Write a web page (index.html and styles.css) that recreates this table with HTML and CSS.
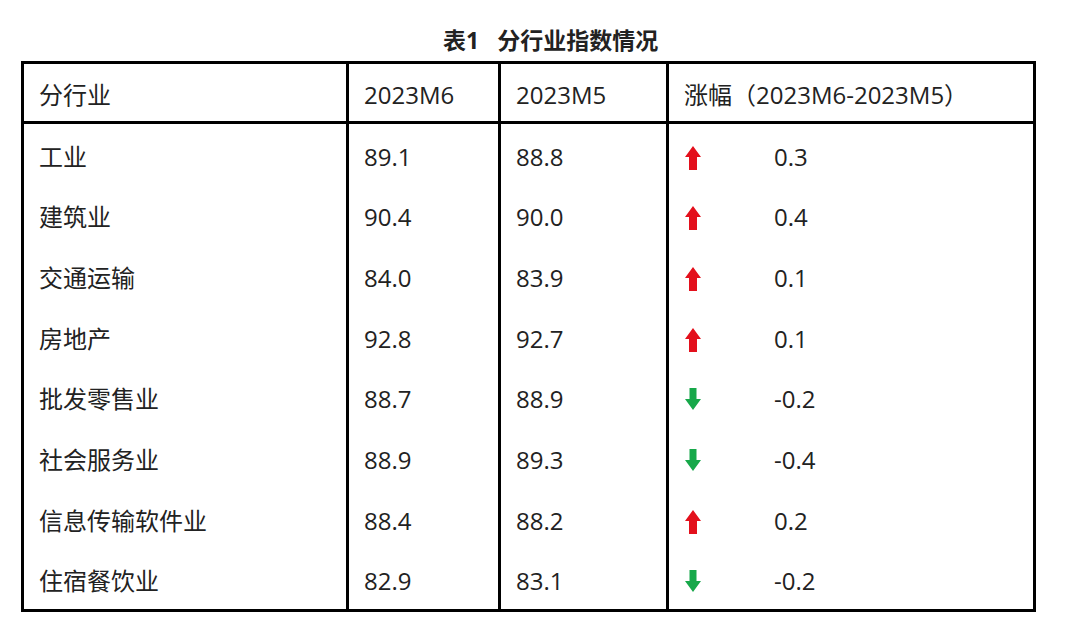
FILE: index.html
```html
<!DOCTYPE html>
<html lang="zh-CN">
<head>
<meta charset="utf-8">
<title>表1 分行业指数情况</title>
<link rel="stylesheet" href="styles.css">
</head>
<body>
<div class="page">
  <h1 class="title">表1<span class="title-main">分行业指数情况</span></h1>
  <div class="grid">
    <div class="cell head first">分行业</div>
    <div class="cell head">2023M6</div>
    <div class="cell head">2023M5</div>
    <div class="cell head">涨幅（2023M6-2023M5）</div>

    <div class="body">
      <div class="cell first">工业</div><div class="cell">89.1</div><div class="cell">88.8</div>
      <div class="cell chg"><svg class="arr up" viewBox="0 0 16 24"><polygon points="8,0 16,11 12,11 12,24 4,24 4,11 0,11"/></svg><span class="val">0.3</span></div>

      <div class="cell first">建筑业</div><div class="cell">90.4</div><div class="cell">90.0</div>
      <div class="cell chg"><svg class="arr up" viewBox="0 0 16 24"><polygon points="8,0 16,11 12,11 12,24 4,24 4,11 0,11"/></svg><span class="val">0.4</span></div>

      <div class="cell first">交通运输</div><div class="cell">84.0</div><div class="cell">83.9</div>
      <div class="cell chg"><svg class="arr up" viewBox="0 0 16 24"><polygon points="8,0 16,11 12,11 12,24 4,24 4,11 0,11"/></svg><span class="val">0.1</span></div>

      <div class="cell first">房地产</div><div class="cell">92.8</div><div class="cell">92.7</div>
      <div class="cell chg"><svg class="arr up" viewBox="0 0 16 24"><polygon points="8,0 16,11 12,11 12,24 4,24 4,11 0,11"/></svg><span class="val">0.1</span></div>

      <div class="cell first">批发零售业</div><div class="cell">88.7</div><div class="cell">88.9</div>
      <div class="cell chg"><svg class="arr down" viewBox="0 0 16 22"><polygon points="4.5,0 11.5,0 11.5,11 16,11 8,22 0,11 4.5,11"/></svg><span class="val">-0.2</span></div>

      <div class="cell first">社会服务业</div><div class="cell">88.9</div><div class="cell">89.3</div>
      <div class="cell chg"><svg class="arr down" viewBox="0 0 16 22"><polygon points="4.5,0 11.5,0 11.5,11 16,11 8,22 0,11 4.5,11"/></svg><span class="val">-0.4</span></div>

      <div class="cell first">信息传输软件业</div><div class="cell">88.4</div><div class="cell">88.2</div>
      <div class="cell chg"><svg class="arr up" viewBox="0 0 16 24"><polygon points="8,0 16,11 12,11 12,24 4,24 4,11 0,11"/></svg><span class="val">0.2</span></div>

      <div class="cell first">住宿餐饮业</div><div class="cell">82.9</div><div class="cell">83.1</div>
      <div class="cell chg"><svg class="arr down" viewBox="0 0 16 22"><polygon points="4.5,0 11.5,0 11.5,11 16,11 8,22 0,11 4.5,11"/></svg><span class="val">-0.2</span></div>
    </div>
  </div>
</div>
</body>
</html>
```

FILE: styles.css
```css
html, body {
  margin: 0;
  padding: 0;
  background: #fff;
}
body {
  font-family: "Open Sans", "Noto Sans CJK SC", sans-serif;
  color: #222;
}
.page {
  padding: 25px 0 0 21px;
  width: 1015px;
}
.title {
  margin: 0 0 6px 0;
  padding-left: 422px;
  font-size: 23px;
  line-height: 30px;
  font-weight: 700;
  color: #222;
}
.title-main {
  margin-left: 18px;
}
.grid {
  border: 3px solid #000;
  display: grid;
  grid-template-columns: 322px 152px 168px 367px;
  grid-template-rows: 60px 485px;
}
.body {
  grid-column: 1 / -1;
  display: grid;
  grid-template-columns: 322px 152px 168px 367px;
  grid-template-rows: repeat(8, 1fr);
}
.cell {
  box-sizing: border-box;
  border-left: 3px solid #000;
  padding-left: 15px;
  padding-top: 5px;
  display: flex;
  align-items: center;
  font-size: 24px;
  line-height: 30px;
  white-space: nowrap;
}
.cell.first {
  border-left: none;
  padding-left: 15px;
}
.cell.head {
  border-bottom: 3px solid #000;
  padding-top: 4px;
}
.chg {
  padding-left: 16px;
}
.arr {
  display: block;
  flex: none;
  width: 16px;
  margin-right: 73px;
  filter: blur(0.4px);
}
.arr.up {
  height: 24px;
  fill: #e3101c;
  margin-top: 2px;
}
.arr.down {
  height: 22px;
  fill: #17a84a;
  margin-top: 0;
}
```
